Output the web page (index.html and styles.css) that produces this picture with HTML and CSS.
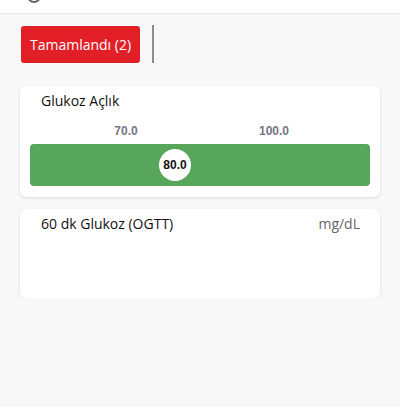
FILE: index.html
```html
<!doctype html>
<html>
<head>
<meta charset="utf-8">
<title>Glukoz</title>
<link rel="stylesheet" href="styles.css">
</head>
<body>
<div class="topbar"><span class="topbar-arc"></span></div>

<div class="tabs">
    <button class="tab-done">Tamamlandı (2)</button>
    <span class="tab-sep"></span>
</div>

<div class="card">
    <div class="card-head">
        <span class="card-title">Glukoz Açlık</span>
    </div>
    <div class="range-labels">
        <span class="range-min">70.0</span>
        <span class="range-max">100.0</span>
    </div>
    <div class="range-bar">
        <span class="range-value">80.0</span>
    </div>
</div>

<div class="card card-empty">
    <div class="card-head">
        <span class="card-title">60 dk Glukoz (OGTT)</span>
        <span class="card-unit">mg/dL</span>
    </div>
</div>
</body>
</html>
```

FILE: styles.css
```css
body {
    margin: 0;
    background: #f8f8f8;
    font-family: "Open Sans", "Noto Sans", sans-serif;
    color: #111;
}
.topbar {
    height: 13px;
    background: #fff;
    border-bottom: 1px solid #e6e6e6;
    position: relative;
    overflow: hidden;
}
.topbar-arc {
    position: absolute;
    left: 27px;
    top: -11px;
    width: 10px;
    height: 10px;
    border: 2px solid #666;
    border-radius: 50%;
}
.tabs {
    display: flex;
    align-items: center;
    padding: 11px 21px 0;
    gap: 12px;
}
.tab-done {
    height: 37px;
    width: 119px;
    border: none;
    border-radius: 3px;
    background: #e21f26;
    color: #fff;
    font: 14px "Open Sans", "Noto Sans", sans-serif;
    padding: 0;
}
.tab-sep {
    width: 2px;
    height: 38px;
    background: #8a8f96;
}
.card {
    margin: 23px 20px 0;
    background: #fff;
    border-radius: 6px;
    box-shadow: 0 1px 3px rgba(0,0,0,0.12);
    padding: 4px 10px 11px;
}
.card-head {
    display: flex;
    justify-content: space-between;
    align-items: center;
    padding: 0 10px 0 11px;
    height: 20px;
}
.card-title {
    font-size: 14px;
}
.card-unit {
    font-size: 14px;
    color: #666;
}
.range-labels {
    position: relative;
    height: 24px;
    margin-top: 10px;
    font: bold 12px "Liberation Sans", Arial, sans-serif;
    color: #767684;
}
.range-min, .range-max {
    position: absolute;
    top: 4px;
    transform: translateX(-50%);
}
.range-min { left: 96px; }
.range-max { left: 244px; }
.range-bar {
    position: relative;
    height: 42px;
    background: #58a55c;
    border-radius: 4px;
}
.range-value {
    position: absolute;
    left: 129px;
    top: 5px;
    width: 32px;
    height: 32px;
    border-radius: 50%;
    background: #fff;
    font: bold 12px/32px "Liberation Sans", Arial, sans-serif;
    text-align: center;
    color: #111;
}
.card-empty {
    margin-top: 12px;
    height: 74px;
    padding-top: 4px;
}
```
